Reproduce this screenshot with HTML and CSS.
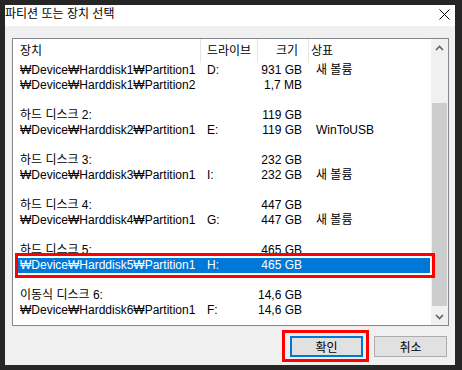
FILE: index.html
```html
<!DOCTYPE html>
<html lang="ko">
<head>
<meta charset="utf-8">
<link rel="stylesheet" href="styles.css">
</head>
<body>
<div class="window">
  <div class="titlebar">
    <span class="title">파티션 또는 장치 선택</span>
    <svg class="close" width="11" height="11" viewBox="0 0 11 11"><path d="M0.5 0.5 L10.5 10.5 M10.5 0.5 L0.5 10.5" stroke="#000" stroke-width="1" fill="none"/></svg>
  </div>
  <div class="body">
    <div class="listbox">
      <div class="content">
        <div class="header">
          <div class="hcell c1">장치</div>
          <div class="hcell c2">드라이브</div>
          <div class="hcell c3">크기</div>
          <div class="hcell c4">상표</div>
        </div>
        <div class="rows">
          <div class="row"><span class="c1">₩Device₩Harddisk1₩Partition1</span><span class="c2">D:</span><span class="c3">931 GB</span><span class="c4">새 볼륨</span></div>
          <div class="row"><span class="c1">₩Device₩Harddisk1₩Partition2</span><span class="c2"></span><span class="c3">1,7 MB</span><span class="c4"></span></div>
          <div class="row"></div>
          <div class="row"><span class="c1">하드 디스크 2:</span><span class="c2"></span><span class="c3">119 GB</span><span class="c4"></span></div>
          <div class="row"><span class="c1">₩Device₩Harddisk2₩Partition1</span><span class="c2">E:</span><span class="c3">119 GB</span><span class="c4">WinToUSB</span></div>
          <div class="row"></div>
          <div class="row"><span class="c1">하드 디스크 3:</span><span class="c2"></span><span class="c3">232 GB</span><span class="c4"></span></div>
          <div class="row"><span class="c1">₩Device₩Harddisk3₩Partition1</span><span class="c2">I:</span><span class="c3">232 GB</span><span class="c4">새 볼륨</span></div>
          <div class="row"></div>
          <div class="row"><span class="c1">하드 디스크 4:</span><span class="c2"></span><span class="c3">447 GB</span><span class="c4"></span></div>
          <div class="row"><span class="c1">₩Device₩Harddisk4₩Partition1</span><span class="c2">G:</span><span class="c3">447 GB</span><span class="c4">새 볼륨</span></div>
          <div class="row"></div>
          <div class="row"><span class="c1">하드 디스크 5:</span><span class="c2"></span><span class="c3">465 GB</span><span class="c4"></span></div>
          <div class="row selected"><span class="c1">₩Device₩Harddisk5₩Partition1</span><span class="c2">H:</span><span class="c3">465 GB</span><span class="c4"></span></div>
          <div class="row"></div>
          <div class="row"><span class="c1">이동식 디스크 6:</span><span class="c2"></span><span class="c3">14,6 GB</span><span class="c4"></span></div>
          <div class="row"><span class="c1">₩Device₩Harddisk6₩Partition1</span><span class="c2">F:</span><span class="c3">14,6 GB</span><span class="c4"></span></div>
        </div>
      </div>
      <div class="scrollbar">
        <div class="sbtn"><svg width="9" height="6" viewBox="0 0 9 6"><path d="M1 5 L4.5 1.5 L8 5" stroke="#606060" stroke-width="1.6" fill="none"/></svg></div>
        <div class="track"><div class="thumb"></div></div>
        <div class="sbtn"><svg width="9" height="6" viewBox="0 0 9 6"><path d="M1 1 L4.5 4.5 L8 1" stroke="#606060" stroke-width="1.6" fill="none"/></svg></div>
      </div>
    </div>
    <div class="buttons">
      <button class="btn default">확인</button>
      <button class="btn">취소</button>
    </div>
  </div>
  <div class="mark mark-row"></div>
  <div class="mark mark-btn"></div>
</div>
</body>
</html>
```

FILE: styles.css
```css
html, body {
  margin: 0;
  padding: 0;
  background: #262626;
}
body {
  padding: 5px;
  font-family: "Liberation Sans", "Noto Sans CJK KR", sans-serif;
  font-size: 12px;
  color: #000;
}
.window {
  position: relative;
  width: 450px;
  height: 360px;
  background: #f0f0f0;
  display: flex;
  flex-direction: column;
}
.titlebar {
  height: 21px;
  background: #fff;
  display: flex;
  justify-content: space-between;
  align-items: flex-start;
}
.title {
  font-family: "Noto Sans CJK KR", sans-serif;
  font-size: 12px;
  line-height: 16px;
  padding-top: 0;
}
.close {
  margin-top: 4px;
  margin-right: 5px;
}
.body {
  flex: 1;
  padding: 12px 6px 0 7px;
  display: flex;
  flex-direction: column;
}
.listbox {
  height: 286px;
  border: 1px solid #828790;
  background: #fff;
  display: flex;
}
.content {
  flex: 1;
  overflow: hidden;
}
.header {
  height: 24px;
  display: grid;
  grid-template-columns: 188px 57px 51px 1fr;
}
.hcell {
  line-height: 22px;
  font-family: "Noto Sans CJK KR", sans-serif;
  white-space: nowrap;
}
.hcell.c1, .hcell.c2, .hcell.c3 {
  border-right: 1px solid #e5e5e5;
}
.hcell.c1 { padding-left: 7px; }
.hcell.c2 { padding-left: 6px; }
.hcell.c3 { padding-right: 10px; text-align: right; }
.hcell.c4 { padding-left: 2px; }
.rows {
  display: flex;
  flex-direction: column;
}
.row {
  height: 15px;
  line-height: 15px;
  margin: 0 1px 0 5px;
  display: grid;
  grid-template-columns: 183px 57px 51px 1fr;
  white-space: nowrap;
}
.row span { overflow: hidden; }
.row .c1 { padding-left: 2px; }
.row .c2 { padding-left: 6px; }
.row .c3 { padding-right: 7px; text-align: right; }
.row .c4 { padding-left: 7px; }
.row.selected {
  background: #0078d7;
  color: #fff;
}
.scrollbar {
  width: 17px;
  background: #f0f0f0;
  display: flex;
  flex-direction: column;
}
.sbtn {
  height: 17px;
  display: flex;
  align-items: center;
  justify-content: center;
}
.track {
  flex: 1;
  padding-top: 47px;
}
.thumb {
  height: 203px;
  margin: 0 1px;
  background: #cdcdcd;
}
.buttons {
  margin-top: 10px;
  padding-right: 2px;
  display: flex;
  justify-content: flex-end;
  gap: 11px;
}
.btn {
  width: 73px;
  height: 21px;
  margin: 0;
  padding: 0;
  background: #e1e1e1;
  border: 1px solid #adadad;
  font-family: "Noto Sans CJK KR", sans-serif;
  font-size: 12px;
  color: #000;
}
.btn.default {
  border: 2px solid #0078d7;
}
.mark {
  position: absolute;
  border: 3px solid #ff0000;
  box-sizing: border-box;
}
.mark-row {
  left: 10px;
  top: 248px;
  width: 420px;
  height: 25px;
}
.mark-btn {
  left: 277px;
  top: 325px;
  width: 87px;
  height: 32px;
}
```
